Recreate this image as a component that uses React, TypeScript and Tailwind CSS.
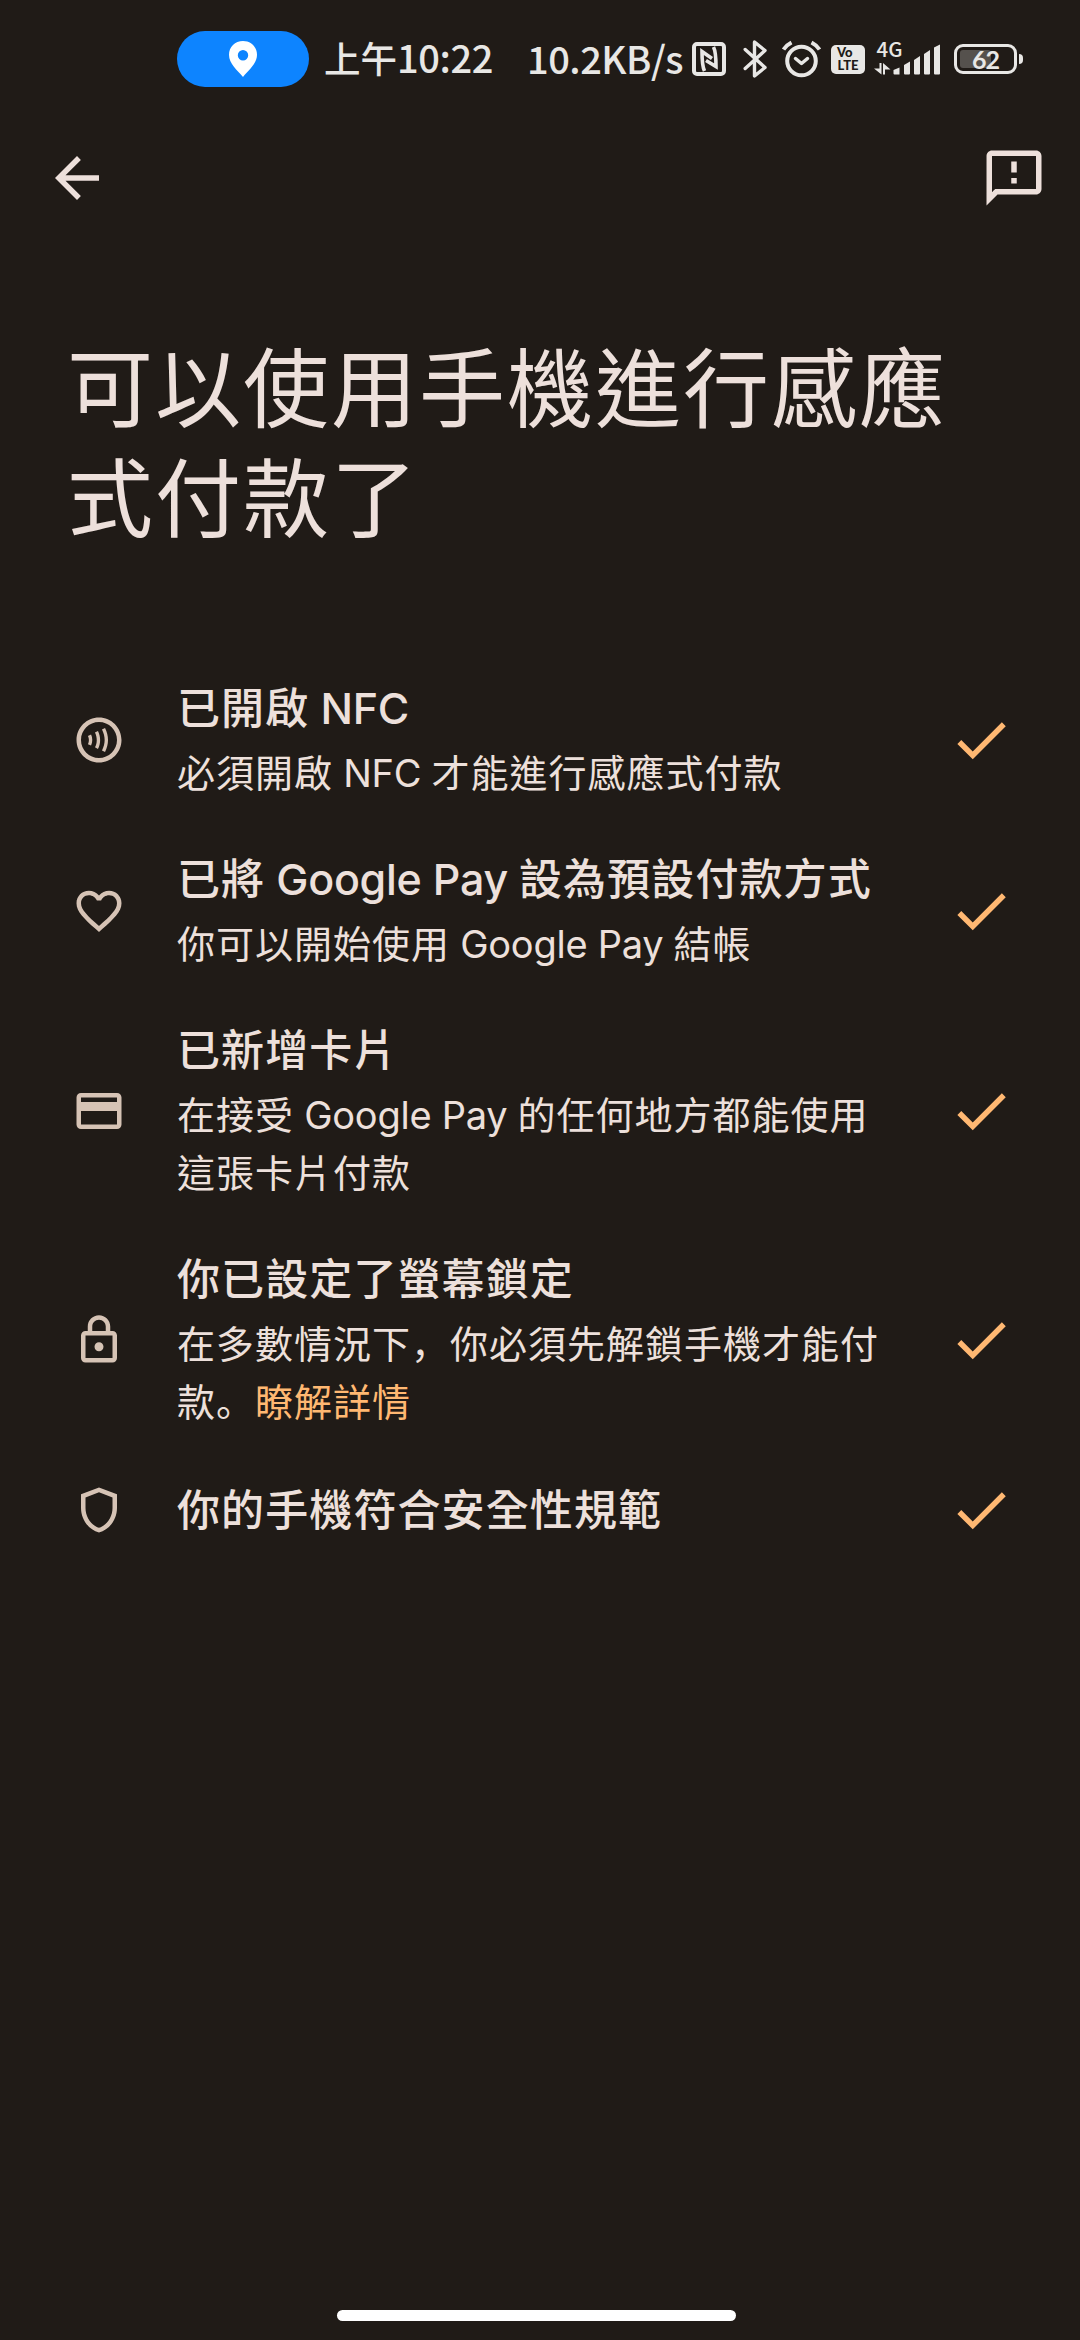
import type { ReactNode } from 'react';
import type { IconType } from 'react-icons';
import {
  MdArrowBack,
  MdCheck,
  MdFavoriteBorder,
  MdOutlineContactless,
  MdOutlineCreditCard,
  MdOutlineFeedback,
  MdOutlineLock,
  MdOutlineShield,
} from 'react-icons/md';

type Item = {
  icon: IconType;
  title: ReactNode;
  body?: ReactNode;
};

// Latin words sit tighter than the CJK text around them
function Latin({ children }: { children: ReactNode }) {
  return <span className="tracking-[-0.250px] [word-spacing:0px]">{children}</span>;
}

// Full-width punctuation set on the baseline instead of centred
function Punct({ children }: { children: ReactNode }) {
  return (
    <span className="font-['Noto_Sans_CJK_SC',sans-serif] leading-none" lang="zh-CN">
      {children}
    </span>
  );
}

const ITEMS: Item[] = [
  {
    icon: MdOutlineContactless,
    title: <>已開啟 <Latin>NFC</Latin></>,
    body: <>必須開啟 <Latin>NFC</Latin> 才能進行感應式付款</>,
  },
  {
    icon: MdFavoriteBorder,
    title: <>已將 <Latin>Google Pay</Latin> 設為預設付款方式</>,
    body: <>你可以開始使用 <Latin>Google Pay</Latin> 結帳</>,
  },
  {
    icon: MdOutlineCreditCard,
    title: '已新增卡片',
    body: (
      <>
        在接受 <Latin>Google Pay</Latin> 的任何地方都能使用
        <br />
        這張卡片付款
      </>
    ),
  },
  {
    icon: MdOutlineLock,
    title: '你已設定了螢幕鎖定',
    body: (
      <>
        在多數情況下<Punct>，</Punct>你必須先解鎖手機才能付
        <br />
        款<Punct>。</Punct>
        <a className="text-[#ffb872]">瞭解詳情</a>
      </>
    ),
  },
  { icon: MdOutlineShield, title: '你的手機符合安全性規範' },
];

function NfcIcon() {
  return (
    <svg className="ml-[10px] h-[34px] w-[34px] shrink-0" viewBox="0 0 34 34" fill="none" stroke="currentColor">
      <rect x="2" y="2" width="30" height="30" rx="3" strokeWidth="4" />
      <path d="M12.5 29C10.5 25 10 19 10 9.500L20 16.500" strokeWidth="3.600" />
      <path d="M21.500 5C23.500 9 24 15 24 24.500L14 18.500" strokeWidth="3.600" />
    </svg>
  );
}

function BluetoothIcon() {
  return (
    <svg
      className="ml-[17px] h-[40px] w-[25px] shrink-0"
      viewBox="0 0 25 40"
      fill="none"
      stroke="currentColor"
      strokeWidth="3.4"
      strokeLinecap="round"
      strokeLinejoin="round"
    >
      <path d="M2.200 10.500L22 28.500L11.500 37V3L22 11.500L2.200 29.500" />
    </svg>
  );
}

function AlarmIcon() {
  return (
    <svg
      className="ml-[13px] h-[38px] w-[41px] shrink-0"
      viewBox="0 0 41 38"
      fill="none"
      stroke="currentColor"
      strokeWidth="4"
      strokeLinecap="round"
    >
      <circle cx="20.500" cy="21" r="14.300" />
      <path d="M14.500 18.500L20.500 23.500L26.500 18.500" strokeWidth="3.500" strokeLinejoin="round" />
      <path d="M2.500 9.500C4.500 6.500 7.500 4 10.500 2.500M38.500 9.500C36.500 6.500 33.500 4 30.500 2.500" strokeLinecap="butt" />
    </svg>
  );
}

function SignalIcon() {
  return (
    <svg className="ml-[9px] h-[34px] w-[68px] shrink-0 overflow-visible" viewBox="0 0 68 34" fill="currentColor">
      <text x="2.500" y="15" className="font-['Noto_Sans_CJK_TC'] text-[20px] font-medium" textLength="26" lengthAdjust="spacingAndGlyphs">
        4G
      </text>
      {/* up / down traffic arrows */}
      <path d="M5.500 21H7.500V32.500L0 26.500H5.500Z" />
      <path d="M11 32.500H9V21L16.500 27.500H11Z" />
      {/* strength bars */}
      <path d="M19.500 28L25.500 25.500V32.500H20.500Q19.500 32.500 19.500 31.500Z" />
      <path d="M30 23L36 19.500V31.500Q36 32.500 35 32.500H31Q30 32.500 30 31.500Z" />
      <path d="M40 18L46 14V31.500Q46 32.500 45 32.500H41Q40 32.500 40 31.500Z" />
      <path d="M50 12L56 8V31.500Q56 32.500 55 32.500H51Q50 32.500 50 31.500Z" />
      <path d="M60 5.500L66 2.500V31.500Q66 32.500 65 32.500H61Q60 32.500 60 31.500Z" />
    </svg>
  );
}

function StatusBar() {
  return (
    <div className="flex h-[118px] items-center pl-[177px] font-['Noto_Sans_CJK_TC',sans-serif] text-[#e8e7e5]">
      <div className="flex h-14 w-[132px] shrink-0 items-center justify-center rounded-full bg-[#0d84ff]">
        <svg className="h-9 w-7" viewBox="0 0 28 36" fill="#fff">
          <path
            fillRule="evenodd"
            d="M14 0C6 0 0 6 0 13.800C0 22.500 8 29 14 36C20 29 28 22.500 28 13.800C28 6 22 0 14 0ZM14 9A5.200 5.200 0 1 1 14 19.400A5.200 5.200 0 1 1 14 9Z"
          />
        </svg>
      </div>
      <span className="mb-[3px] ml-[15px] w-[168px] shrink-0 text-[36.500px] leading-[56px] font-medium whitespace-nowrap">
        上午<span className="text-[38px] tracking-[-0.400px]">10:22</span>
      </span>
      <span className="mb-[3px] ml-[35px] w-[155px] shrink-0 text-[38px] leading-[56px] font-medium tracking-[-0.500px] whitespace-nowrap">
        10.2KB/s
      </span>
      <NfcIcon />
      <BluetoothIcon />
      <AlarmIcon />
      <div className="ml-[9px] flex h-[29px] w-[34px] shrink-0 flex-col items-center justify-center rounded-[5px] bg-[#e8e7e5] font-['Lato',sans-serif] text-[13px] leading-[13px] font-black text-[#201b17]">
        <span className="self-start pl-[6px]">Vo</span>
        <span>LTE</span>
      </div>
      <SignalIcon />
      <div className="ml-[12px] flex shrink-0 items-center gap-[2px]">
        <div className="relative flex h-[30px] w-[63px] items-center justify-center rounded-[9px] border-[3.500px] border-current">
          <div className="absolute top-[3px] left-[3px] h-[18px] w-[31px] rounded-[3px] bg-[#55514d]" />
          <span className="relative font-['Lato'] text-[25px] leading-none font-bold tracking-[-1px]">62</span>
        </div>
        <div className="h-[10px] w-[4px] rounded-r-sm bg-current" />
      </div>
    </div>
  );
}

function Row({ icon: Icon, title, body }: Item) {
  return (
    <li className="flex items-center pt-[25px] pr-[66px] pb-[21px] pl-[72px]">
      <Icon className="size-[54px] shrink-0 text-[#d6c3b5]" />
      <div className="ml-[51px] flex-1 whitespace-nowrap [word-spacing:-1.5px]">
        <h2 className="text-[43px] leading-[63px] font-medium tracking-[1.100px]">{title}</h2>
        {body && <p className="mt-1 text-[38px] leading-[58px] tracking-[1px]">{body}</p>}
      </div>
      <MdCheck className="size-[66px] shrink-0 text-[#ffb872]" />
    </li>
  );
}

export default function App() {
  return (
    <div className="flex h-[2340px] w-[1080px] flex-col overflow-hidden bg-[#201b17] font-['Inter','Noto_Sans_CJK_TC',sans-serif] text-[#ede0db]">
      <StatusBar />

      {/* App bar */}
      <header className="flex h-[120px] items-center justify-between pr-[33px] pl-[44px]">
        <MdArrowBack className="size-[66px]" />
        <MdOutlineFeedback className="size-[66px]" />
      </header>

      <h1 className="mt-[97px] pl-[67px] text-[86px] leading-[110px] font-normal tracking-[2px] whitespace-nowrap">
        可以使用手機進行感應
        <br />
        式付款了
      </h1>

      <ul className="mt-[97px]">
        {ITEMS.map((item, i) => (
          <Row key={i} {...item} />
        ))}
      </ul>

      {/* Gesture handle */}
      <div className="mt-auto mb-[19px] ml-[337px] h-[11px] w-[399px] rounded-full bg-white" />
    </div>
  );
}
